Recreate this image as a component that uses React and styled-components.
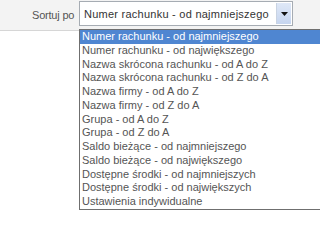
import React from "react";
import styled, { createGlobalStyle } from "styled-components";

const Global = createGlobalStyle`
  html, body { margin: 0; padding: 0; background: #ffffff; overflow: hidden; }
  body { font-family: "Liberation Sans", Arial, sans-serif; }
`;

const Page = styled.div`
  position: relative;
  width: 100%;
  min-width: 294px;
  height: 211px;
  overflow: hidden;
  background: #ffffff;
`;

const Toolbar = styled.div`
  display: flex;
  align-items: center;
  height: 31px;
  box-sizing: border-box;
  background: #f3f3f3;
  border-bottom: 1px solid #d6d6d6;
  padding-left: 32px;
  gap: 6px;
`;

const Label = styled.span`
  font-size: 11px;
  color: #555555;
  width: 41px;
  white-space: nowrap;
  letter-spacing: -0.2px;
`;

const Select = styled.div`
  display: flex;
  align-items: center;
  width: 214px;
  height: 25px;
  box-sizing: border-box;
  margin-top: -3px;
  border: 1px solid #a6acb3;
  background: #ffffff;
  padding-left: 4px;
`;

const SelectText = styled.span`
  flex: 1;
  font-size: 11px;
  letter-spacing: 0.25px;
  color: #333333;
  white-space: nowrap;
`;

const ArrowButton = styled.span`
  display: flex;
  align-items: center;
  justify-content: center;
  width: 14px;
  height: 21px;
  margin-right: 1px;
  background: linear-gradient(#dfe8f7, #c6d5ef);
  border-left: 1px solid #c9d3e2;
`;

const List = styled.ul`
  position: absolute;
  left: 79px;
  top: 29px;
  width: 300px;
  margin: 0;
  padding: 0;
  list-style: none;
  border: 1px solid #6f6f6f;
  background: #ffffff;
`;

const Item = styled.li`
  height: 13.77px;
  line-height: 13.77px;
  padding-left: 2px;
  font-size: 11px;
  white-space: nowrap;
  color: ${(p) => (p.$active ? "#ffffff" : "#555555")};
  background: ${(p) => (p.$active ? "#4f86d1" : "transparent")};
`;

const options = [
  "Numer rachunku - od najmniejszego",
  "Numer rachunku - od największego",
  "Nazwa skrócona rachunku - od A do Z",
  "Nazwa skrócona rachunku - od Z do A",
  "Nazwa firmy - od A do Z",
  "Nazwa firmy - od Z do A",
  "Grupa - od A do Z",
  "Grupa - od Z do A",
  "Saldo bieżące - od najmniejszego",
  "Saldo bieżące - od największego",
  "Dostępne środki - od najmniejszych",
  "Dostępne środki - od największych",
  "Ustawienia indywidualne",
];

export default function App() {
  return (
    <Page>
      <Global />
      <Toolbar>
        <Label>Sortuj po</Label>
        <Select>
          <SelectText>{options[0]}</SelectText>
          <ArrowButton>
            <svg width="7" height="4" viewBox="0 0 7 4">
              <path d="M0 0 L7 0 L3.5 4 Z" fill="#111" />
            </svg>
          </ArrowButton>
        </Select>
      </Toolbar>
      <List>
        {options.map((o, i) => (
          <Item key={o} $active={i === 0}>
            {o}
          </Item>
        ))}
      </List>
    </Page>
  );
}
